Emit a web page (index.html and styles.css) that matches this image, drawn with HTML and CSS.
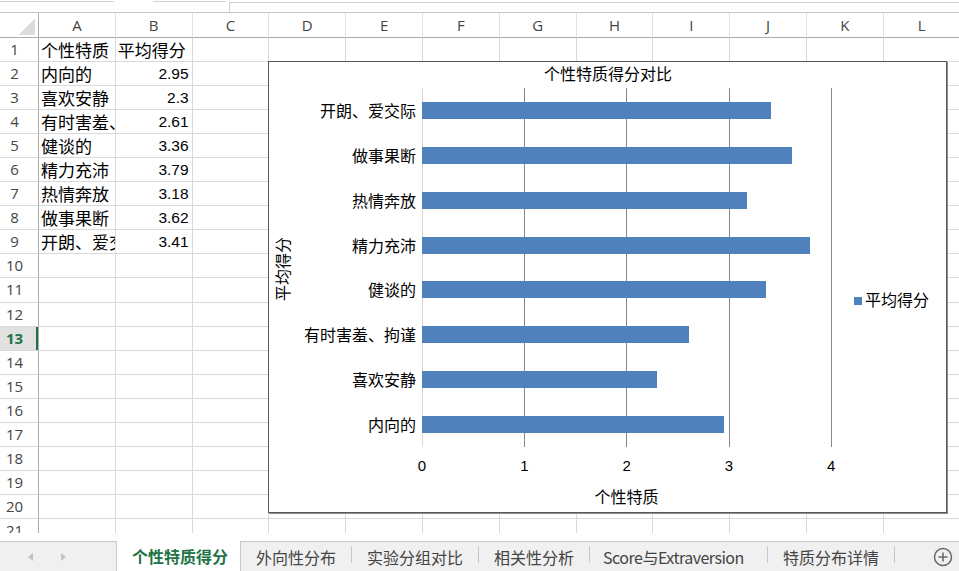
FILE: index.html
```html
<!DOCTYPE html>
<html lang="zh-CN">
<head>
  <meta charset="UTF-8">
  <title>个性特质得分</title>
  <link rel="stylesheet" href="styles.css">
</head>
<body>
<!-- Formula bar (only its lower edge is visible) -->
<div class="formula-bar">
  <span class="name-box"></span>
  <span class="fx"></span>
  <span class="fx-input"></span>
</div>

<!-- Sheet grid -->
<div class="sheet">
  <div class="row head">
    <div class="rh corner"><span class="tri"></span></div>
    <div class="cell">A</div><div class="cell">B</div><div class="cell">C</div><div class="cell">D</div>
    <div class="cell">E</div><div class="cell">F</div><div class="cell">G</div><div class="cell">H</div>
    <div class="cell">I</div><div class="cell">J</div><div class="cell">K</div><div class="cell">L</div>
  </div>
  <div class="row">
    <div class="rh">1</div><div class="cell">个性特质</div><div class="cell">平均得分</div>
    <div class="cell"></div><div class="cell"></div><div class="cell"></div><div class="cell"></div><div class="cell"></div>
    <div class="cell"></div><div class="cell"></div><div class="cell"></div><div class="cell"></div><div class="cell"></div>
  </div>
  <div class="row">
    <div class="rh">2</div><div class="cell">内向的</div><div class="cell n">2.95</div>
    <div class="cell"></div><div class="cell"></div><div class="cell"></div><div class="cell"></div><div class="cell"></div>
    <div class="cell"></div><div class="cell"></div><div class="cell"></div><div class="cell"></div><div class="cell"></div>
  </div>
  <div class="row">
    <div class="rh">3</div><div class="cell">喜欢安静</div><div class="cell n">2.3</div>
    <div class="cell"></div><div class="cell"></div><div class="cell"></div><div class="cell"></div><div class="cell"></div>
    <div class="cell"></div><div class="cell"></div><div class="cell"></div><div class="cell"></div><div class="cell"></div>
  </div>
  <div class="row">
    <div class="rh">4</div><div class="cell">有时害羞、拘谨</div><div class="cell n">2.61</div>
    <div class="cell"></div><div class="cell"></div><div class="cell"></div><div class="cell"></div><div class="cell"></div>
    <div class="cell"></div><div class="cell"></div><div class="cell"></div><div class="cell"></div><div class="cell"></div>
  </div>
  <div class="row">
    <div class="rh">5</div><div class="cell">健谈的</div><div class="cell n">3.36</div>
    <div class="cell"></div><div class="cell"></div><div class="cell"></div><div class="cell"></div><div class="cell"></div>
    <div class="cell"></div><div class="cell"></div><div class="cell"></div><div class="cell"></div><div class="cell"></div>
  </div>
  <div class="row">
    <div class="rh">6</div><div class="cell">精力充沛</div><div class="cell n">3.79</div>
    <div class="cell"></div><div class="cell"></div><div class="cell"></div><div class="cell"></div><div class="cell"></div>
    <div class="cell"></div><div class="cell"></div><div class="cell"></div><div class="cell"></div><div class="cell"></div>
  </div>
  <div class="row">
    <div class="rh">7</div><div class="cell">热情奔放</div><div class="cell n">3.18</div>
    <div class="cell"></div><div class="cell"></div><div class="cell"></div><div class="cell"></div><div class="cell"></div>
    <div class="cell"></div><div class="cell"></div><div class="cell"></div><div class="cell"></div><div class="cell"></div>
  </div>
  <div class="row">
    <div class="rh">8</div><div class="cell">做事果断</div><div class="cell n">3.62</div>
    <div class="cell"></div><div class="cell"></div><div class="cell"></div><div class="cell"></div><div class="cell"></div>
    <div class="cell"></div><div class="cell"></div><div class="cell"></div><div class="cell"></div><div class="cell"></div>
  </div>
  <div class="row">
    <div class="rh">9</div><div class="cell">开朗、爱交际</div><div class="cell n">3.41</div>
    <div class="cell"></div><div class="cell"></div><div class="cell"></div><div class="cell"></div><div class="cell"></div>
    <div class="cell"></div><div class="cell"></div><div class="cell"></div><div class="cell"></div><div class="cell"></div>
  </div>
  <div class="row">
    <div class="rh">10</div>
    <div class="cell"></div><div class="cell"></div><div class="cell"></div><div class="cell"></div><div class="cell"></div><div class="cell"></div>
    <div class="cell"></div><div class="cell"></div><div class="cell"></div><div class="cell"></div><div class="cell"></div><div class="cell"></div>
  </div>
  <div class="row">
    <div class="rh">11</div>
    <div class="cell"></div><div class="cell"></div><div class="cell"></div><div class="cell"></div><div class="cell"></div><div class="cell"></div>
    <div class="cell"></div><div class="cell"></div><div class="cell"></div><div class="cell"></div><div class="cell"></div><div class="cell"></div>
  </div>
  <div class="row">
    <div class="rh">12</div>
    <div class="cell"></div><div class="cell"></div><div class="cell"></div><div class="cell"></div><div class="cell"></div><div class="cell"></div>
    <div class="cell"></div><div class="cell"></div><div class="cell"></div><div class="cell"></div><div class="cell"></div><div class="cell"></div>
  </div>
  <div class="row">
    <div class="rh active">13</div>
    <div class="cell"></div><div class="cell"></div><div class="cell"></div><div class="cell"></div><div class="cell"></div><div class="cell"></div>
    <div class="cell"></div><div class="cell"></div><div class="cell"></div><div class="cell"></div><div class="cell"></div><div class="cell"></div>
  </div>
  <div class="row">
    <div class="rh">14</div>
    <div class="cell"></div><div class="cell"></div><div class="cell"></div><div class="cell"></div><div class="cell"></div><div class="cell"></div>
    <div class="cell"></div><div class="cell"></div><div class="cell"></div><div class="cell"></div><div class="cell"></div><div class="cell"></div>
  </div>
  <div class="row">
    <div class="rh">15</div>
    <div class="cell"></div><div class="cell"></div><div class="cell"></div><div class="cell"></div><div class="cell"></div><div class="cell"></div>
    <div class="cell"></div><div class="cell"></div><div class="cell"></div><div class="cell"></div><div class="cell"></div><div class="cell"></div>
  </div>
  <div class="row">
    <div class="rh">16</div>
    <div class="cell"></div><div class="cell"></div><div class="cell"></div><div class="cell"></div><div class="cell"></div><div class="cell"></div>
    <div class="cell"></div><div class="cell"></div><div class="cell"></div><div class="cell"></div><div class="cell"></div><div class="cell"></div>
  </div>
  <div class="row">
    <div class="rh">17</div>
    <div class="cell"></div><div class="cell"></div><div class="cell"></div><div class="cell"></div><div class="cell"></div><div class="cell"></div>
    <div class="cell"></div><div class="cell"></div><div class="cell"></div><div class="cell"></div><div class="cell"></div><div class="cell"></div>
  </div>
  <div class="row">
    <div class="rh">18</div>
    <div class="cell"></div><div class="cell"></div><div class="cell"></div><div class="cell"></div><div class="cell"></div><div class="cell"></div>
    <div class="cell"></div><div class="cell"></div><div class="cell"></div><div class="cell"></div><div class="cell"></div><div class="cell"></div>
  </div>
  <div class="row">
    <div class="rh">19</div>
    <div class="cell"></div><div class="cell"></div><div class="cell"></div><div class="cell"></div><div class="cell"></div><div class="cell"></div>
    <div class="cell"></div><div class="cell"></div><div class="cell"></div><div class="cell"></div><div class="cell"></div><div class="cell"></div>
  </div>
  <div class="row">
    <div class="rh">20</div>
    <div class="cell"></div><div class="cell"></div><div class="cell"></div><div class="cell"></div><div class="cell"></div><div class="cell"></div>
    <div class="cell"></div><div class="cell"></div><div class="cell"></div><div class="cell"></div><div class="cell"></div><div class="cell"></div>
  </div>
  <div class="row">
    <div class="rh">21</div>
    <div class="cell"></div><div class="cell"></div><div class="cell"></div><div class="cell"></div><div class="cell"></div><div class="cell"></div>
    <div class="cell"></div><div class="cell"></div><div class="cell"></div><div class="cell"></div><div class="cell"></div><div class="cell"></div>
  </div>

  <!-- Embedded bar chart floating over the cells -->
  <div class="chart">
    <svg width="677" height="450" viewBox="0 0 677 450">
      <text class="title" x="339" y="18">个性特质得分对比</text>

      <line class="axis" x1="153.5" y1="26" x2="153.5" y2="385"/>
      <line class="gridline" x1="255.5" y1="26" x2="255.5" y2="385"/>
      <line class="gridline" x1="357.5" y1="26" x2="357.5" y2="385"/>
      <line class="gridline" x1="460.5" y1="26" x2="460.5" y2="385"/>
      <line class="gridline" x1="562.5" y1="26" x2="562.5" y2="385"/>

      <g class="bars">
        <rect x="153" y="40" width="349" height="17"/>
        <rect x="153" y="85" width="370" height="17"/>
        <rect x="153" y="130" width="325" height="17"/>
        <rect x="153" y="175" width="388" height="17"/>
        <rect x="153" y="219" width="344" height="17"/>
        <rect x="153" y="264" width="267" height="17"/>
        <rect x="153" y="309" width="235" height="17"/>
        <rect x="153" y="354" width="302" height="17"/>
      </g>

      <g class="cats">
        <text x="147" y="54.5">开朗、爱交际</text>
        <text x="147" y="99.5">做事果断</text>
        <text x="147" y="144.5">热情奔放</text>
        <text x="147" y="189.5">精力充沛</text>
        <text x="147" y="233.5">健谈的</text>
        <text x="147" y="278.5">有时害羞、拘谨</text>
        <text x="147" y="323.5">喜欢安静</text>
        <text x="147" y="368.5">内向的</text>
      </g>

      <g class="ticks">
        <text x="153" y="408.5">0</text>
        <text x="255.3" y="408.5">1</text>
        <text x="357.6" y="408.5">2</text>
        <text x="459.9" y="408.5">3</text>
        <text x="562.2" y="408.5">4</text>
      </g>

      <text class="axis-title" x="357.5" y="441">个性特质</text>
      <text class="axis-title" x="0" y="6" transform="translate(13.5 207) rotate(-90)">平均得分</text>

      <rect class="legend-key" x="585" y="235" width="8" height="8"/>
      <text class="legend" x="596" y="243.5">平均得分</text>
    </svg>
  </div>
</div>

<!-- Sheet tabs -->
<div class="tabs">
  <div class="tab-nav">
    <svg width="5" height="8" viewBox="0 0 5 8"><path d="M5 0L0 4l5 4z"/></svg>
    <svg width="5" height="8" viewBox="0 0 5 8"><path d="M0 0l5 4-5 4z"/></svg>
  </div>
  <div class="tab active">个性特质得分</div>
  <div class="tab">外向性分布</div><span class="sep"></span>
  <div class="tab">实验分组对比</div><span class="sep"></span>
  <div class="tab">相关性分析</div><span class="sep"></span>
  <div class="tab wide">Score与Extraversion</div><span class="sep"></span>
  <div class="tab">特质分布详情</div><span class="sep"></span>
  <svg class="add-sheet" width="20" height="20" viewBox="0 0 20 20">
    <circle cx="10" cy="10" r="8.5"/>
    <path d="M10 5.5v9M5.5 10h9"/>
  </svg>
</div>
</body>
</html>
```

FILE: styles.css
```css
/* Page */
body {
  margin: 0;
  width: 959px;
  height: 571px;
  overflow: hidden;
  background: #fff;
  font-family: "Noto Sans CJK SC", sans-serif;
}

/* Formula bar remnant */
.formula-bar {
  display: flex;
  height: 12px;
  border-bottom: 1px solid #c6c6c6;
}
.name-box {
  width: 114px;
  margin-top: 1px;
  border-top: 1px solid #d0d0d0;
}
.fx {
  width: 73px;
  margin: 1px 0 0 39px;
  border-top: 1px solid #d0d0d0;
}
.fx-input {
  flex: 1;
  margin: 2px 0 0 3px;
  border-top: 1px solid #d0d0d0;
  border-left: 1px solid #d0d0d0;
}

/* Grid */
.sheet {
  position: relative;
  height: 520px;
  overflow: hidden;
}
.row {
  display: flex;
  height: 24.05px;
}
.row.head {
  height: 25px;
}
.rh {
  flex: none;
  width: 39px;
  box-sizing: border-box;
  padding-right: 9px;
  border-right: 1px solid #ababab;
  border-bottom: 1px solid #d9d9d9;
  text-align: center;
  font: 15px/23px "Open Sans", sans-serif;
  color: #444;
}
.rh.active {
  background: #e1e1e1;
  color: #217346;
  font-weight: bold;
  box-shadow: inset -2px 0 #217346;
}
.cell {
  flex: none;
  width: 76.8px;
  box-sizing: border-box;
  padding: 0 3px 0 2px;
  border-right: 1px solid #d9d9d9;
  border-bottom: 1px solid #d9d9d9;
  overflow: hidden;
  white-space: nowrap;
  font: 17px/23px "Noto Sans CJK SC", sans-serif;
  color: #000;
}
.cell.n {
  text-align: right;
  font: 15.5px/23px "Liberation Sans", sans-serif;
}
.head .cell {
  padding: 0;
  text-align: center;
  font: 15px/25px "Open Sans", sans-serif;
  color: #444;
  border-right-color: #e1e1e1;
  border-bottom-color: #ababab;
}
.head .rh {
  display: flex;
  align-items: flex-end;
  justify-content: flex-end;
  padding: 0 3px 2px 0;
  border-bottom-color: #ababab;
}
.tri {
  width: 17px;
  height: 17px;
  background: linear-gradient(to bottom right, transparent 50%, #dcdcdc 50%);
}

/* Chart */
.chart {
  position: absolute;
  left: 268px;
  top: 48px;
  width: 679px;
  height: 452px;
  box-sizing: border-box;
  border: 1px solid #595959;
  box-shadow: 1px 1px 0 #8c8c8c;
  background: #fff;
}
.chart svg {
  display: block;
}
.chart text {
  font-family: "Liberation Sans", "Noto Sans CJK SC", sans-serif;
  font-size: 16px;
  fill: #000;
}
.chart .title,
.chart .axis-title,
.chart .ticks text {
  text-anchor: middle;
}
.chart .ticks text {
  font-size: 15px;
}
.chart .cats text {
  text-anchor: end;
}
.axis {
  stroke: #d9d9d9;
}
.gridline {
  stroke: #878787;
}
.bars rect,
.legend-key {
  fill: #4f81bd;
}

/* Sheet tabs */
.tabs {
  display: flex;
  align-items: center;
  height: 30px;
  margin-top: 8px;
  box-sizing: border-box;
  border-top: 1px solid #c6c6c6;
  background: #f0f0f0;
  font-size: 16px;
  color: #444;
}
.tab-nav {
  flex: none;
  width: 116px;
  display: flex;
  align-items: center;
  gap: 28px;
  padding-left: 28px;
  box-sizing: border-box;
  fill: #c2c2c2;
}
.tab {
  flex: none;
  align-self: stretch;
  display: flex;
  align-items: center;
  padding: 0 15px;
  white-space: nowrap;
}
.tab.active {
  margin-top: -1px;
  padding: 0 12px 0 15px;
  background: #fff;
  border-left: 1px solid #c6c6c6;
  border-right: 1px solid #c6c6c6;
  color: #217346;
  font-weight: bold;
}
.tab.wide {
  width: 177px;
  box-sizing: border-box;
  padding-left: 13px;
  letter-spacing: -0.5px;
}
.sep {
  flex: none;
  align-self: flex-start;
  width: 1px;
  height: 17px;
  margin-top: 4px;
  background: #c6c6c6;
}
.add-sheet {
  margin: 0 6px 0 auto;
  fill: none;
  stroke: #666;
  stroke-width: 1.5;
}
```
